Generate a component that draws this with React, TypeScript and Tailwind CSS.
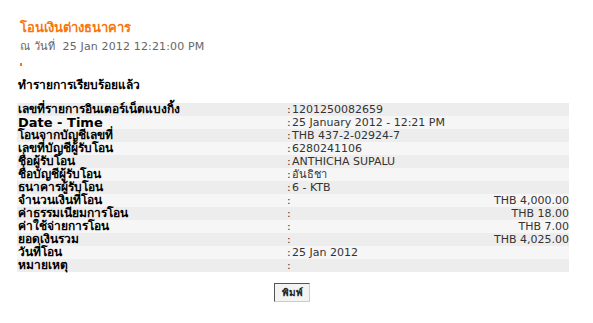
import React from "react";

const rows: { label: string; value: string; right?: boolean; big?: boolean }[] = [
  { label: "เลขที่รายการอินเตอร์เน็ตแบงกิ้ง", value: "1201250082659" },
  { label: "Date - Time", value: "25 January 2012 - 12:21 PM", big: true },
  { label: "โอนจากบัญชีเลขที่", value: "THB 437-2-02924-7" },
  { label: "เลขที่บัญชีผู้รับโอน", value: "6280241106" },
  { label: "ชื่อผู้รับโอน", value: "ANTHICHA SUPALU" },
  { label: "ชื่อบัญชีผู้รับโอน", value: "อันธิชา" },
  { label: "ธนาคารผู้รับโอน", value: "6 - KTB" },
  { label: "จำนวนเงินที่โอน", value: "THB 4,000.00", right: true },
  { label: "ค่าธรรมเนียมการโอน", value: "THB 18.00", right: true },
  { label: "ค่าใช้จ่ายการโอน", value: "THB 7.00", right: true },
  { label: "ยอดเงินรวม", value: "THB 4,025.00", right: true },
  { label: "วันที่โอน", value: "25 Jan 2012" },
  { label: "หมายเหตุ", value: "" },
];

const font = { fontFamily: "Tahoma, 'DejaVu Sans', Verdana, sans-serif" };

export default function App() {
  return (
    <div className="w-[593px] h-[323px] bg-white overflow-hidden" style={font}>
      <div className="pl-[20px] pt-[19px]">
        <div className="text-[13px] leading-[17px] font-bold text-[#f7760d]">โอนเงินต่างธนาคาร</div>
        <div className="mt-[4px] text-[11px] leading-[13px] text-[#666666] tracking-[0.15px]">
          ณ วันที่&nbsp;&nbsp;25 Jan 2012 12:21:00 PM
        </div>
        <div className="mt-[10px] w-[2px] h-[3px] bg-[#f7760d]"></div>
      </div>
      <div className="pl-[18px] mt-[12px] text-[12px] leading-[15px] font-bold text-black">
        ทำรายการเรียบร้อยแล้ว
      </div>
      <div className="ml-[17px] mt-[10px] w-[552px] flex flex-col">
        {rows.map((r, i) => (
          <div
            key={i}
            className={`flex h-[13px] items-center ${i % 2 === 0 ? "bg-[#eeeded]" : "bg-[#f6f6f6]"}`}
          >
            <div
              className={`w-[270px] pl-[1px] font-bold text-black whitespace-nowrap ${
                r.big ? "text-[13px] leading-[13px]" : "text-[12px] leading-[13px]"
              }`}
            >
              {r.label}
            </div>
            <div className="flex-1 flex text-[11px] leading-[13px] text-[#333333] whitespace-nowrap">
              <span className="w-[5px]">:</span>
              <span className={r.right ? "flex-1 text-right" : "flex-1"}>{r.value}</span>
            </div>
          </div>
        ))}
      </div>
      <div className="flex justify-center mt-[11px]">
        <button className="ml-[-9px] w-[36px] h-[19px] bg-[#f3f3f3] border border-t-[#555] border-l-[#555] border-r-[#ccc] border-b-[#ccc] text-[10px] font-bold text-[#222] leading-[15px]">
          พิมพ์
        </button>
      </div>
    </div>
  );
}
